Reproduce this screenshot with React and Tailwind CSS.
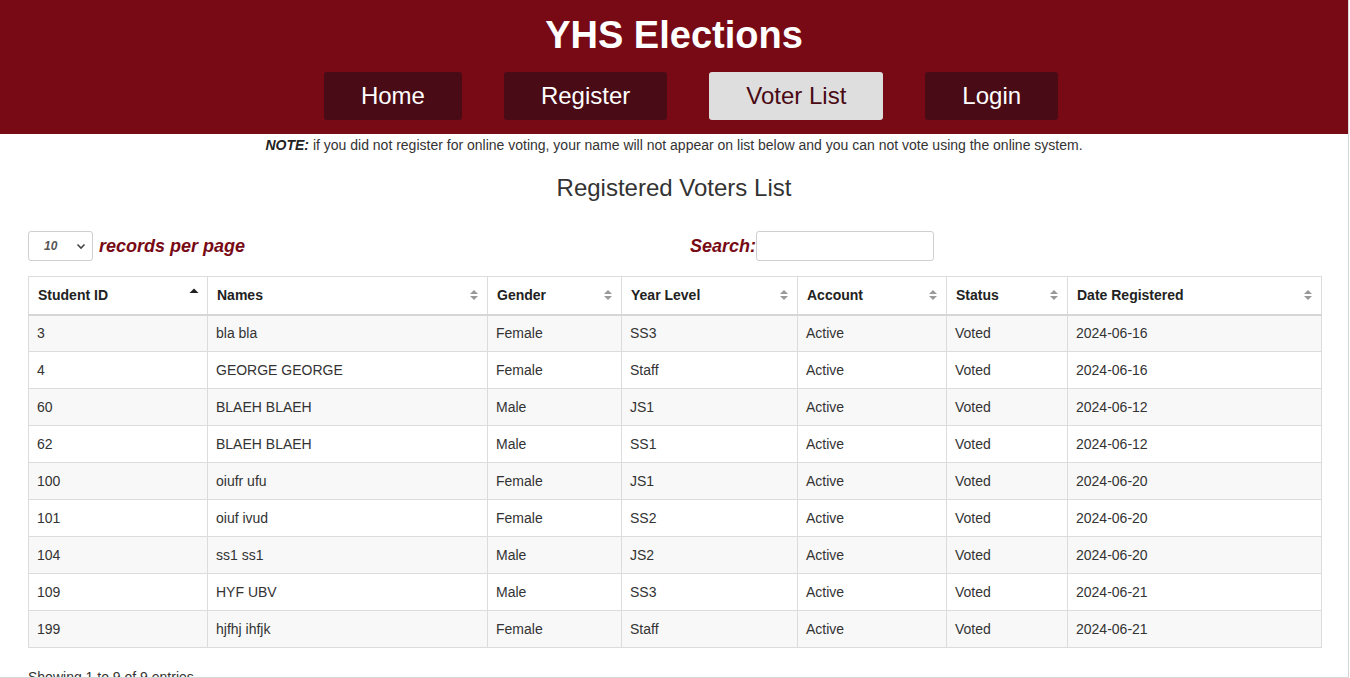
import { useState } from 'react'

const voters = [
  { id: '3', name: 'bla bla', gender: 'Female', level: 'SS3', account: 'Active', status: 'Voted', date: '2024-06-16' },
  { id: '4', name: 'GEORGE GEORGE', gender: 'Female', level: 'Staff', account: 'Active', status: 'Voted', date: '2024-06-16' },
  { id: '60', name: 'BLAEH BLAEH', gender: 'Male', level: 'JS1', account: 'Active', status: 'Voted', date: '2024-06-12' },
  { id: '62', name: 'BLAEH BLAEH', gender: 'Male', level: 'SS1', account: 'Active', status: 'Voted', date: '2024-06-12' },
  { id: '100', name: 'oiufr ufu', gender: 'Female', level: 'JS1', account: 'Active', status: 'Voted', date: '2024-06-20' },
  { id: '101', name: 'oiuf ivud', gender: 'Female', level: 'SS2', account: 'Active', status: 'Voted', date: '2024-06-20' },
  { id: '104', name: 'ss1 ss1', gender: 'Male', level: 'JS2', account: 'Active', status: 'Voted', date: '2024-06-20' },
  { id: '109', name: 'HYF UBV', gender: 'Male', level: 'SS3', account: 'Active', status: 'Voted', date: '2024-06-21' },
  { id: '199', name: 'hjfhj ihfjk', gender: 'Female', level: 'Staff', account: 'Active', status: 'Voted', date: '2024-06-21' },
]

const columns = [
  { key: 'id', label: 'Student ID', w: 'w-[179px]', active: true },
  { key: 'name', label: 'Names', w: 'w-[280px]' },
  { key: 'gender', label: 'Gender', w: 'w-[134px]' },
  { key: 'level', label: 'Year Level', w: 'w-[176px]' },
  { key: 'account', label: 'Account', w: 'w-[149px]' },
  { key: 'status', label: 'Status', w: 'w-[121px]' },
  { key: 'date', label: 'Date Registered', w: 'w-[254px]' },
]

const nav = ['Home', 'Register', 'Voter List', 'Login']

function SortIcon({ active }) {
  if (active) {
    return (
      <svg width="10" height="14" viewBox="0 0 10 14" className="shrink-0 -mt-[4px]">
        <path d="M0.5 7 L5 2.5 L9.5 7 Z" fill="#222" />
      </svg>
    )
  }
  return (
    <svg width="10" height="14" viewBox="0 0 10 14" className="shrink-0">
      <path d="M1 6 L5 2 L9 6 Z" fill="#999" />
      <path d="M1 8 L5 12 L9 8 Z" fill="#999" />
    </svg>
  )
}

export default function App() {
  const [perPage, setPerPage] = useState('10')
  const [search, setSearch] = useState('')

  return (
    <div className="w-[1350px] h-[678px] overflow-hidden bg-white font-['Liberation_Sans',Arial,sans-serif] text-[#333]">
      <div className="w-[1349px] h-[678px] border-r border-b border-[#d6d6d6] overflow-hidden">
        <header className="bg-[#780a15] pt-[14px] pb-[14px] flex flex-col items-center">
          <h1 className="text-[38px] leading-[42px] font-bold text-white">YHS Elections</h1>
          <nav className="mt-[16px] ml-[34px] flex gap-[42px]">
            {nav.map((n) => (
              <a
                key={n}
                href="#"
                className={
                  'h-[48px] flex items-center justify-center rounded-[3px] text-[24px] px-[37px] ' +
                  (n === 'Voter List' ? 'bg-[#dedede] text-[#4a0a14]' : 'bg-[#490b15] text-white')
                }
              >
                {n}
              </a>
            ))}
          </nav>
        </header>

        <p className="text-center text-[14px] leading-[20px] mt-[1px]">
          <b className="italic text-[#222]">NOTE:</b> if you did not register for online voting, your name will not appear on list below and you can not vote using the online system.
        </p>

        <h2 className="text-center text-[24px] leading-[28px] mt-[19px]">Registered Voters List</h2>

        <div className="px-[28px] mt-[29px] flex items-center">
          <div className="flex items-center w-[662px]">
            <div className="relative w-[65px] h-[30px]">
              <select
                value={perPage}
                onChange={(e) => setPerPage(e.target.value)}
                className="appearance-none w-full h-full border border-[#cfcfcf] rounded-[3px] bg-white pl-[15px] text-[12px] italic font-bold text-[#555]"
              >
                <option value="10">10</option>
                <option value="25">25</option>
                <option value="50">50</option>
              </select>
              <svg width="10" height="7" viewBox="0 0 10 7" className="absolute right-[7px] top-[12px] pointer-events-none">
                <path d="M1.5 1.5 L5 5 L8.5 1.5" stroke="#444" strokeWidth="1.6" fill="none" />
              </svg>
            </div>
            <span className="ml-[6px] text-[18px] font-bold italic text-[#780a15]">records per page</span>
          </div>
          <label className="flex items-center">
            <span className="text-[18px] font-bold italic text-[#780a15]">Search:</span>
            <input
              value={search}
              onChange={(e) => setSearch(e.target.value)}
              className="w-[178px] h-[30px] border border-[#cfcfcf] rounded-[3px] px-2 text-[14px]"
            />
          </label>
        </div>

        <div className="px-[28px] mt-[15px]">
          <table className="w-[1293px] table-fixed border-collapse text-[14px]">
            <thead>
              <tr className="h-[38px]">
                {columns.map((c) => (
                  <th key={c.key} className={c.w + ' border border-[#dcdcdc] border-b-2 border-b-[#d6d6d6] pl-[9px] pr-[8px] text-left font-bold text-[#222]'}>
                    <div className="flex items-center justify-between">
                      <span>{c.label}</span>
                      <SortIcon active={c.active} />
                    </div>
                  </th>
                ))}
              </tr>
            </thead>
            <tbody>
              {voters.map((v, i) => (
                <tr key={v.id} className={'h-[37px] ' + (i % 2 === 0 ? 'bg-[#f8f8f8]' : 'bg-white')}>
                  {columns.map((c) => (
                    <td key={c.key} className="border border-[#dcdcdc] px-[8px] text-[#333]">
                      {v[c.key]}
                    </td>
                  ))}
                </tr>
              ))}
            </tbody>
          </table>
          <p className="mt-[19px] text-[14px] text-[#333]">Showing 1 to 9 of 9 entries</p>
        </div>
      </div>
    </div>
  )
}
